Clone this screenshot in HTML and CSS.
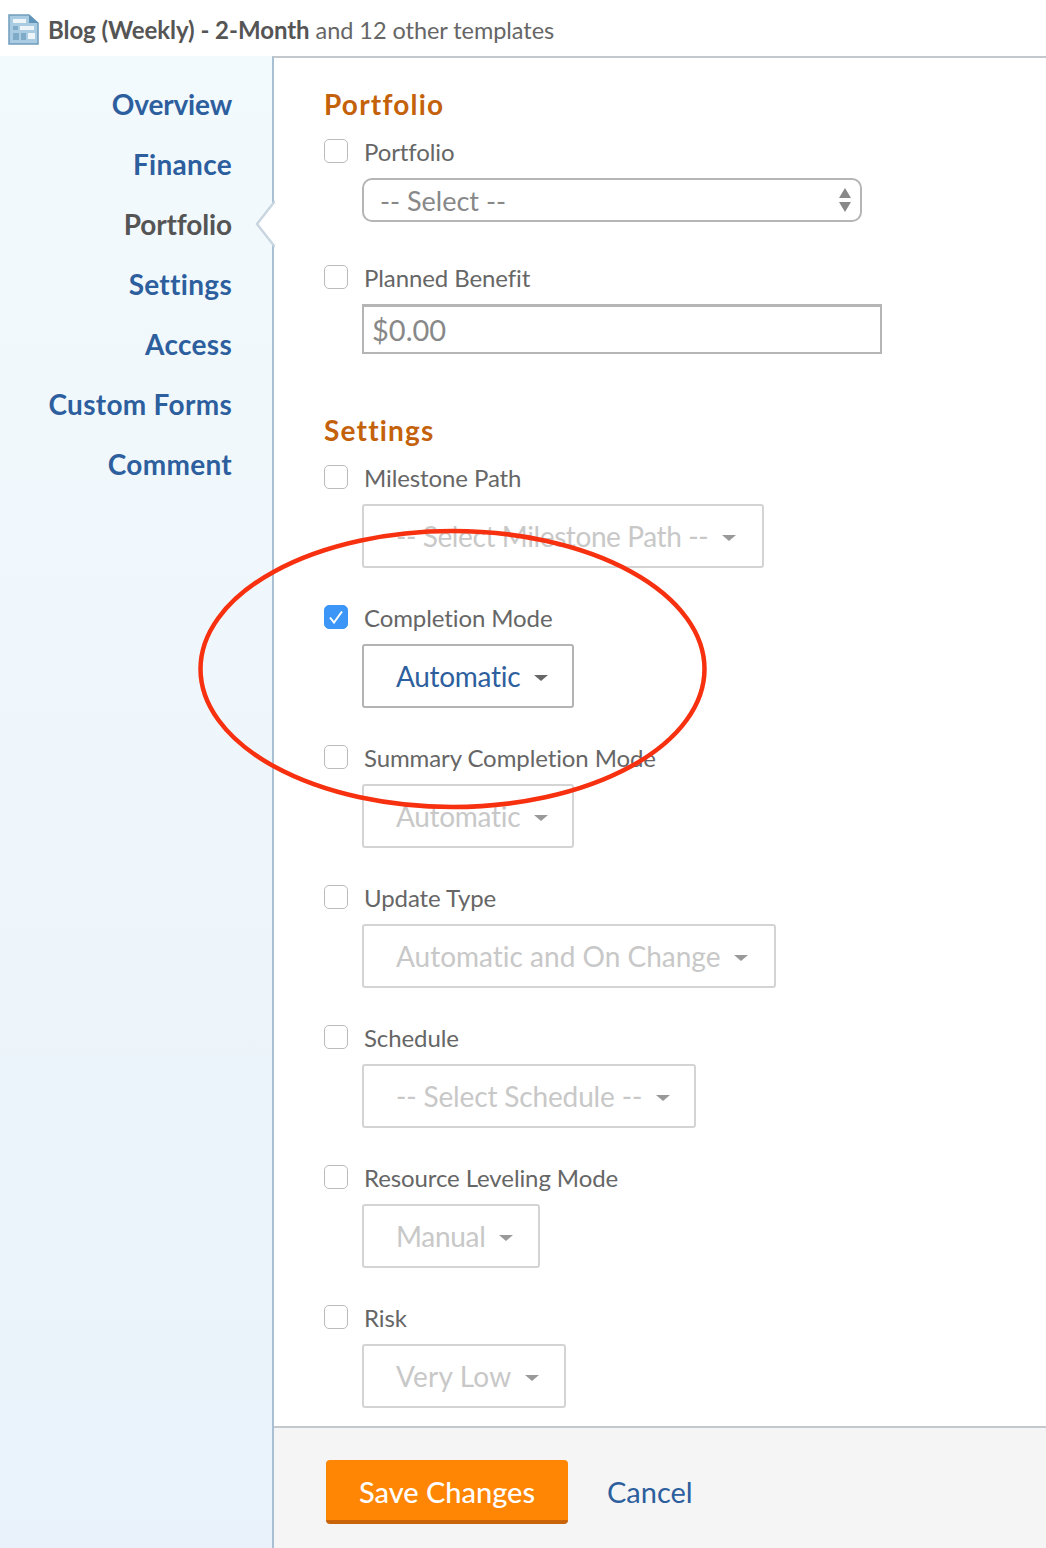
FILE: index.html
```html
<!DOCTYPE html>
<html lang="en">
<head>
<meta charset="utf-8">
<title>Blog (Weekly) - 2-Month and 12 other templates</title>
<link rel="stylesheet" href="styles.css">
</head>
<body>
<header class="top">
  <svg class="doc" width="31" height="31" viewBox="0 0 31 31">
    <path d="M1 1H21L30 9V30H1Z" fill="#a9cce2" stroke="#6f9dbd" stroke-width="1.5"/>
    <path d="M21 1L30 9H21Z" fill="#5f93b8"/>
    <path d="M5 5H18V9H5ZM12 12H26V16H12Z" fill="#eef5f9"/>
    <path d="M5 12H10V16H5ZM5 19H11V26H5ZM13 19H18V26H13Z" fill="#7fabc9"/>
    <path d="M20 19H27V25H20Z" fill="#eef5f9"/>
  </svg>
  <span class="crumb"><b>Blog (Weekly) - 2-Month</b> and 12 other templates</span>
</header>
<div class="body">
  <nav class="side">
    <a class="nav tight">Overview</a>
    <a class="nav">Finance</a>
    <a class="nav here tight">Portfolio</a>
    <a class="nav">Settings</a>
    <a class="nav">Access</a>
    <a class="nav">Custom Forms</a>
    <a class="nav">Comment</a>
  </nav>
  <main class="main">
    <svg class="notch" width="20" height="48" viewBox="0 0 20 48">
      <path d="M20 1L2 24L20 47" fill="#fff" stroke="#c9d6e0" stroke-width="2.5"/>
    </svg>
    <div class="form">
      <h2 class="head">Portfolio</h2>
      <div class="field first">
        <label class="lab"><span class="box"></span>Portfolio</label>
        <div class="select"><span>-- Select --</span>
          <svg width="12" height="28" viewBox="0 0 12 28"><path d="M6 2L12 12H0ZM6 26L0 16H12Z" fill="#888"/></svg>
        </div>
      </div>
      <div class="field second">
        <label class="lab"><span class="box"></span>Planned Benefit</label>
        <div class="input">$0.00</div>
      </div>
      <h2 class="head settings">Settings</h2>
      <div class="field first">
        <label class="lab"><span class="box"></span>Milestone Path</label>
        <div class="drop off w1"><span>-- Select Milestone Path --</span><i class="caret"></i></div>
      </div>
      <div class="field">
        <label class="lab"><span class="box on"><svg width="16" height="14" viewBox="0 0 16 14"><path d="M2 7.5L6 12.5L14 1.5" fill="none" stroke="#fff" stroke-width="2"/></svg></span>Completion Mode</label>
        <div class="drop w2"><span>Automatic</span><i class="caret"></i></div>
      </div>
      <div class="field">
        <label class="lab"><span class="box"></span>Summary Completion Mode</label>
        <div class="drop off w2"><span>Automatic</span><i class="caret"></i></div>
      </div>
      <div class="field">
        <label class="lab"><span class="box"></span>Update Type</label>
        <div class="drop off w3"><span>Automatic and On Change</span><i class="caret"></i></div>
      </div>
      <div class="field">
        <label class="lab"><span class="box"></span>Schedule</label>
        <div class="drop off w4"><span>-- Select Schedule --</span><i class="caret"></i></div>
      </div>
      <div class="field">
        <label class="lab"><span class="box"></span>Resource Leveling Mode</label>
        <div class="drop off w5"><span>Manual</span><i class="caret"></i></div>
      </div>
      <div class="field">
        <label class="lab"><span class="box"></span>Risk</label>
        <div class="drop off w6"><span>Very Low</span><i class="caret"></i></div>
      </div>
    </div>
    <footer class="foot">
      <button class="save">Save Changes</button>
      <a class="cancel">Cancel</a>
    </footer>
  </main>
</div>
<svg class="circle" width="520" height="290" viewBox="0 0 520 290">
  <ellipse cx="259.500" cy="145" rx="252" ry="138" fill="none" stroke="#f7300f" stroke-width="4.500"/>
</svg>
</body>
</html>
```
FILE: styles.css
```css
* { box-sizing: border-box; }
html, body { margin: 0; height: 1548px; overflow: hidden; background: #fff; }
body { font-family: Lato, "Open Sans", sans-serif; font-variant-ligatures: none; color: #5c5c5c; position: relative; }
.top { height: 56px; display: flex; align-items: center; padding: 2px 0 0 8px; gap: 9px; color: #666; }
.top .doc { flex: none; }
.crumb { font-size: 23.5px; white-space: nowrap; letter-spacing: -.05px; }
.crumb b { color: #555; font-size: 24px; font-weight: 700; }
.body { display: flex; height: 1492px; }
.side { width: 272px; flex: none; background: linear-gradient(#f3fafd, #e9f2fa); padding-top: 18px; display: flex; flex-direction: column; align-items: flex-end; padding-right: 40px; }
.nav { height: 60px; line-height: 60px; font-size: 28px; letter-spacing: .3px; font-weight: 700; color: #2d5f9e; }
.nav.tight { letter-spacing: -.15px; }
.nav.here { color: #555; }
.main { flex: 1; border-left: 2px solid #a9bfd3; border-top: 2px solid #c3c8cc; display: flex; flex-direction: column; position: relative; }
.notch { position: absolute; left: -19px; top: 142px; }
.form { flex: 1; padding: 30px 0 0 50px; }
.head { margin: 0; font-size: 28px; letter-spacing: 1.2px; line-height: 32px; font-weight: 700; color: #c4610b; }
.settings { margin-top: 60px; }
.field { margin-top: 37px; }
.field.first { margin-top: 19px; }
.field.second { margin-top: 43px; }
.lab { display: flex; align-items: center; height: 24px; font-size: 24px; letter-spacing: -.1px; color: #666; gap: 16px; white-space: nowrap; }
.box { width: 24px; height: 24px; flex: none; border: 1px solid #bbb; border-radius: 5px; background: #fff; display: flex; align-items: center; justify-content: center; }
.box.on { background: #3b96f7; border-color: #3b96f7; }
.select { margin: 15px 0 0 38px; width: 500px; height: 44px; border: 2px solid #b5b5b5; border-radius: 10px; display: flex; align-items: center; justify-content: space-between; padding: 0 9px 0 16px; font-size: 27px; color: #888; }
.input { margin: 15px 0 0 38px; width: 520px; height: 50px; border: 2px solid #b5b5b5; border-top-width: 3px; padding-left: 8px; display: flex; align-items: center; font-size: 29px; color: #888; }
.drop { margin: 15px 0 0 38px; height: 64px; border: 2px solid #b3b3b3; border-radius: 3px; display: flex; align-items: center; padding-left: 32px; font-size: 28px; color: #2d5f9e; gap: 14px; white-space: nowrap; }
.drop.off { border-color: #d4d4d4; color: #c8c8c8; }
.drop span { flex: none; }
.caret { width: 0; height: 0; border: 7px solid transparent; border-top: 6px solid #666; border-bottom: 0; margin-top: 4px; flex: none; }
.off .caret { border-top-color: #999; }
.w1 { width: 402px; letter-spacing: -.4px; }
.w2 { width: 212px; letter-spacing: -.3px; }
.w3 { width: 414px; }
.w4 { width: 334px; letter-spacing: -.15px; }
.w5 { width: 178px; letter-spacing: -.3px; }
.w6 { width: 204px; letter-spacing: .2px; }
.foot { height: 122px; flex: none; border-top: 2px solid #c3c8cc; background: #f5f5f5; display: flex; align-items: flex-start; padding: 32px 0 0 52px; gap: 39px; }
.save { width: 242px; height: 64px; border: 0; border-bottom: 4px solid #c9640a; border-radius: 4px; background: #ff8504; color: #fff; padding: 2px 0 0; font: 500 29px Lato, "Open Sans", sans-serif; }
.cancel { font-size: 29px; color: #2d5f9e; line-height: 64px; }
.circle { position: absolute; left: 193px; top: 524px; }
```
